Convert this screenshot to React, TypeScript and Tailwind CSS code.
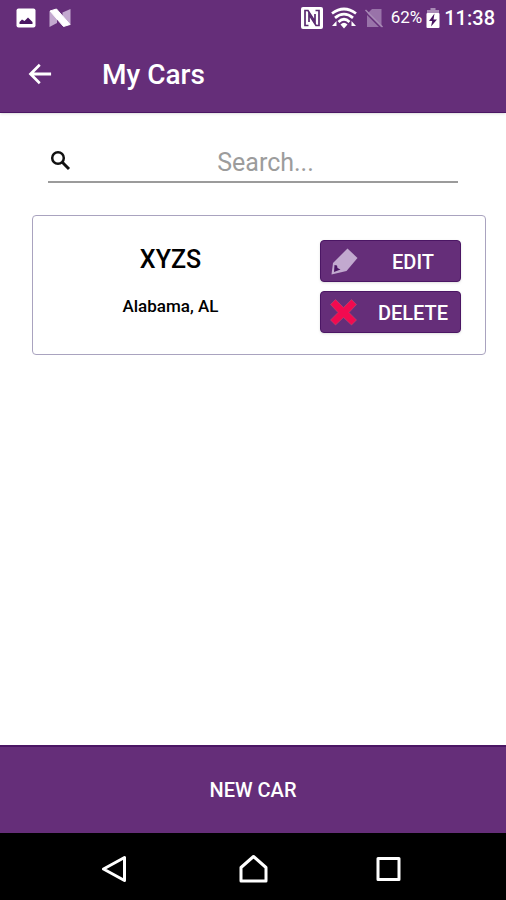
import type { ReactNode } from "react"

type Car = { id: number; name: string; location: string }

const cars: Car[] = [{ id: 1, name: "XYZS", location: "Alabama, AL" }]

function StatusBar() {
  return (
    <div className="flex h-9 items-center justify-between pr-[11px] pl-4 text-white">
      <div className="flex items-center gap-3">
        <svg className="h-5 w-5" viewBox="0 0 20 20" aria-hidden="true">
          <rect x="0.5" y="0.5" width="19" height="19" rx="2" fill="#fff" />
          <path d="M3.500 16v-2l2.500-2.500 2.500 1.500 3.500-3.500 4.500 4.500v2z" fill="#4a1763" />
        </svg>
        <svg className="h-5 w-6" viewBox="0 0 24 20" aria-hidden="true">
          <path d="M1.500 3L9 9v6l-7.500 4zM14.500 4.500L22.500 1v16L14.500 12z" fill="#c3a9cf" />
          <path d="M2 3L8.500 1 22 16.500 15.500 18.500z" fill="#fff" stroke="#fff" strokeLinejoin="round" />
        </svg>
      </div>

      <div className="flex items-center">
        <svg className="h-[22px] w-[22px]" viewBox="0 0 22 22" aria-hidden="true">
          <rect width="22" height="22" rx="2" fill="#fff" />
          <g fill="none" stroke="#5a2a70" strokeWidth="1.700">
            <path d="M7.500 18.500H4V3.500H7L14 14.500V7" />
            <path d="M14.500 3.500H18V18.500H15L8 7.500V15" />
          </g>
        </svg>
        <svg className="ml-2 h-[22px] w-[26px]" viewBox="0 0 26 22" aria-hidden="true">
          <g fill="none" stroke="#fff" strokeWidth="2.800">
            <path d="M1 6.500Q13-2.500 25 6.500" />
            <path d="M4 10.800Q13 3.500 22 10.800" />
            <path d="M7.500 15Q13 9.500 18.500 15" />
          </g>
          <path d="M9.500 17.500Q13 14 16.500 17.500L13 21.500zM5.500 14v5H1zM20.500 14v5H25z" fill="#fff" />
        </svg>
        <svg className="ml-2 h-5 w-[18px]" viewBox="0 0 18 20" aria-hidden="true">
          <path d="M7 1h9.500v18H2V6z" fill="#9973a9" />
          <path d="M0 4L16 20" stroke="#652e79" strokeWidth="1.500" />
          <path d="M0.500 2L17.500 19" stroke="#a98bb6" strokeWidth="1.500" />
        </svg>
        <span className="ml-2 text-[17px]">62%</span>
        <svg className="ml-1 h-5 w-[14px]" viewBox="0 0 14 20" aria-hidden="true">
          <path d="M4.500 0h5v2H13v4H1V2h3.500z" fill="#a98bb6" />
          <rect x="0.500" y="5" width="13" height="15" rx="1" fill="#fff" />
          <path d="M8.500 5.500L3 13h3.200L5 18.500 11 11.500H7.500z" fill="#4a1763" />
        </svg>
        <span className="ml-1 text-xl font-medium">11:38</span>
      </div>
    </div>
  )
}

function Header() {
  return (
    <header className="flex h-[76px] items-center pl-[26px]">
      <button type="button" aria-label="Back" className="flex h-7 w-7 items-center justify-center">
        <svg className="h-7 w-7" viewBox="0 0 24 24" fill="#fff" aria-hidden="true">
          <path d="M21.500 10.700H6.900l5.700-5.700L11 3.200 2.200 12l8.800 8.800 1.600-1.800-5.700-5.700h14.600z" />
        </svg>
      </button>
      <h1 className="ml-12 pt-0.5 text-[28px] leading-8 font-medium text-white">My Cars</h1>
    </header>
  )
}

function SearchField() {
  return (
    <div className="mx-12 flex h-[42px] items-center border-b-2 border-[#9b9b9b]">
      <label htmlFor="search" className="ml-px flex h-6 w-6 items-center justify-center">
        <svg className="h-6 w-6" viewBox="0 0 24 24" fill="none" stroke="#111" aria-label="Search">
          <circle cx="9" cy="9" r="5.800" strokeWidth="2.500" />
          <path d="M13.300 13.300L20 20" strokeWidth="3" />
        </svg>
      </label>
      <input
        id="search"
        type="text"
        placeholder="Search..."
        className="h-10 min-w-0 flex-1 bg-transparent pt-0.5 text-center text-[25px] text-black outline-none placeholder:text-[#9c9c9c]"
      />
    </div>
  )
}

function ActionButton({ icon, children }: { icon: ReactNode; children: ReactNode }) {
  return (
    <button
      type="button"
      className="flex h-[42px] w-full items-center rounded-sm border border-[#4b1664] bg-[#652e79] pl-[9px] text-xl font-medium text-white shadow-sm"
    >
      {icon}
      <span className="flex-1 pt-0.5 pl-2 text-center">{children}</span>
    </button>
  )
}

function PencilIcon() {
  return (
    <svg className="h-7 w-7" viewBox="0 0 28 28" aria-hidden="true">
      <path d="M17.500 1.500L27.500 11 16.500 24 1.500 27.500 3 16z" fill="#c2a9cf" />
      <path d="M4.500 18l2.500 0.500 0.500 2.500 3 1.500-6.500 2.500z" fill="#4b1664" />
    </svg>
  )
}

function CrossIcon() {
  return (
    <svg className="h-7 w-7" viewBox="0 0 28 28" aria-hidden="true">
      <path
        d="M5.500 1.500l8 8 8-8 5 5-7.500 8 7.500 7.500-5 5-8-7.500-8 7.500-5-5 7.500-7.500-7.500-8z"
        fill="#f20a50"
        stroke="#b8506f"
        strokeWidth="0.600"
      />
    </svg>
  )
}

function CarCard({ car }: { car: Car }) {
  return (
    <article className="flex items-start rounded-sm border border-[#a9a3bf] pt-6 pr-6 pb-[21px]">
      <div className="flex flex-1 flex-col items-center gap-3.5 pt-1 pr-3 text-black">
        <h2 className="text-[25px] leading-8 font-medium">{car.name}</h2>
        <p className="text-[17px] leading-8 font-medium">{car.location}</p>
      </div>
      <div className="flex w-[141px] flex-col gap-[9px]">
        <ActionButton icon={<PencilIcon />}>EDIT</ActionButton>
        <ActionButton icon={<CrossIcon />}>DELETE</ActionButton>
      </div>
    </article>
  )
}

function NavigationBar() {
  return (
    <nav className="flex h-[67px] items-center justify-center gap-[106px] bg-black pt-1">
      <button type="button" aria-label="Back">
        <svg className="h-[30px] w-[30px]" viewBox="0 0 30 30" fill="none" stroke="#fff" strokeWidth="3" strokeLinejoin="round" aria-hidden="true">
          <path d="M22.500 3.500v23L1.500 15z" />
        </svg>
      </button>
      <button type="button" aria-label="Home">
        <svg className="h-[30px] w-[30px]" viewBox="0 0 30 30" fill="none" stroke="#fff" strokeWidth="3" strokeLinejoin="round" aria-hidden="true">
          <path d="M15.500 2.500L28 13.500V27H3V13.500z" />
        </svg>
      </button>
      <button type="button" aria-label="Recent apps">
        <svg className="h-[30px] w-[30px]" viewBox="0 0 30 30" fill="none" stroke="#fff" strokeWidth="3" strokeLinejoin="round" aria-hidden="true">
          <rect x="4" y="4.500" width="21" height="21" />
        </svg>
      </button>
    </nav>
  )
}

export default function App() {
  return (
    <div className="flex min-h-screen flex-col bg-white font-[Roboto,sans-serif]">
      <div className="border-b border-[#4b1664] bg-[#652e79] shadow-sm">
        <StatusBar />
        <Header />
      </div>

      <main className="flex-1 pt-7">
        <SearchField />
        <section className="mt-8 mr-5 ml-8 flex flex-col gap-4">
          {cars.map((car) => (
            <CarCard key={car.id} car={car} />
          ))}
        </section>
      </main>

      <button
        type="button"
        className="h-[88px] border-t-2 border-[#4b1664] bg-[#652e79] text-xl font-medium text-white"
      >
        NEW CAR
      </button>
      <NavigationBar />
    </div>
  )
}
